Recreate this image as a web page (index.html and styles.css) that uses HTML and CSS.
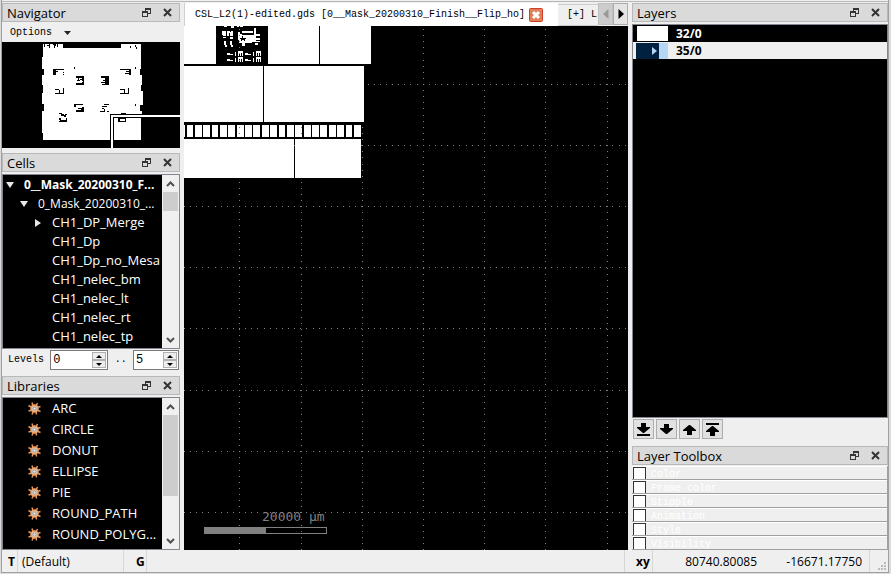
FILE: index.html
```
<!DOCTYPE html>
<html lang="en">
<head>
<meta charset="utf-8">
<title>Layout viewer</title>
<link rel="stylesheet" href="styles.css">
</head>
<body>
<svg class="defs" aria-hidden="true">
  <symbol id="float" viewBox="0 0 9 9"><path d="M3 0h6v6H6v3H0V3h3zM4 3h2v2h2V2H4zM1 5v3h4V5z" fill="#333" fill-rule="evenodd"/></symbol>
  <symbol id="close" viewBox="0 0 9 9"><path d="M1 1l7 7M8 1L1 8" stroke="#333" stroke-width="2"/></symbol>
  <symbol id="gear" viewBox="0 0 13 13">
    <path d="M5 4L4 0.500M8 4L9.500 1M4 5.500L0.500 3.500M9 5.500L12.500 4.500M4 8L0.500 9M9 8L12.500 9.500M5.500 9L4 12.500M8 9L8.500 12.500" stroke="#e8985a" stroke-width="1.500"/>
    <circle cx="6.500" cy="6.500" r="3.500" fill="#d5c4b5" stroke="#f0a060" stroke-width="1.500"/>
    <circle cx="6.500" cy="6.500" r="1.500" fill="#eee" stroke="#999"/>
  </symbol>
  <symbol id="chev-up" viewBox="0 0 9 6"><path d="M1 5l3.500-3.500L8 5" fill="none" stroke="#505050" stroke-width="2"/></symbol>
  <symbol id="chev-down" viewBox="0 0 9 6"><path d="M1 1l3.500 3.500L8 1" fill="none" stroke="#505050" stroke-width="2"/></symbol>
</svg>
<div class="window">
  <div class="main">
    <aside class="dock left">
      <section>
        <header class="dock-title"><h2>Navigator</h2><button aria-label="Float"><svg><use href="#float"/></svg></button><button aria-label="Close"><svg><use href="#close"/></svg></button></header>
        <nav class="menubar"><button>Options <svg width="7" height="4" viewBox="0 0 7 4"><path d="M0 0h7L3.500 4z" fill="#222"/></svg></button></nav>
        <svg class="overview" aria-label="Overview">
          <g transform="translate(-2 -42)" shape-rendering="crispEdges">
            <path d="M43 44H63V48H121V44H141V69H140V75H142V85H141V91H143V105H140V111H142V117H141V140H43V133H42V111H44V104H42V93H43V85H42V75H44V69H42V57H43Z" fill="#fff"/>
            <g transform="scale(.33333)" fill="#000">
              <path d="M132 132h3v9h-3zM141 135h6v-3h3v12h-3v-6h-6zM159 132h9v6h-3v6h-3v-9h-3zM171 132h3v9h-3zM390 138h3v6h-3zM405 135h3v6h3v6h-3v-6h-3z"/>
              <path d="M159 207h33v3h-24v3h6v3h-6v9h-9zM189 216h3v3h-3zM189 222h3v3h-3zM222 201h3v6h-3zM360 207h33v18h-6v-3h-12v-3h12v-3h-9v-3h9v-3h-27zM405 201h3v6h-3z"/>
              <path d="M228 228h24v27h-24v-6h18v-3h3v-3h-3v-3h-6v3h-9v-3h9v-3h6v-3h-18zM234 234h3v6h-3zM303 228h24v27h-21v-3h9v-3h-12v-3h12v-3h-6v-3h6v-6h-12z"/>
              <path d="M165 267h12v3h-12zM189 264h3v18h-27v-3h24zM178 270h3v9h-3zM360 267h15v3h-15zM384 264h3v18h-27v-3h12v-9h3v9h9z"/>
              <path d="M222 312h27v3h-21v6h-6zM246 321h6v15h-24v-6h15v-3h-9v-3h12zM312 312h15v3h-15zM303 318h18v3h-9v6h3v6h12v3h-6v-3h-6v3h-15v-3h12v-6h-6v-3h6v-3h-6zM405 312h3v6h-3z"/>
              <path d="M177 339h9v3h6v3h3v-3h6v3h-3v6h-6v-3h-9v-6h-6zM177 354h6v6h15v-6h3v12h-24v-3h3v-3h-3zM354 354h24v12h-24zM363 339h15v3h-15z"/>
              <path d="M360 357h15v6h-15z" fill="#fff"/>
            </g>
            <path d="M110 148V114H182V118H114V148z" fill="#000"/>
            <path d="M111 149V115H182V117H113V149z" fill="#fff"/>
            <path d="M113 149v-32h69v1h-68v31z" fill="#000"/>
          </g>
        </svg>
      </section>
      <section>
        <header class="dock-title"><h2>Cells</h2><button aria-label="Float"><svg><use href="#float"/></svg></button><button aria-label="Close"><svg><use href="#close"/></svg></button></header>
        <div class="view cells">
          <ul class="tree">
            <li class="top"><span class="open"></span>0__Mask_20200310_F...</li>
            <li class="sub"><span class="open"></span>0_Mask_20200310_...</li>
            <li class="parent"><span class="shut"></span>CH1_DP_Merge</li>
            <li>CH1_Dp</li><li>CH1_Dp_no_Mesa</li><li>CH1_nelec_bm</li><li>CH1_nelec_lt</li><li>CH1_nelec_rt</li><li>CH1_nelec_tp</li>
          </ul>
          <div class="scroll"><svg><use href="#chev-up"/></svg><span class="thumb short"></span><svg><use href="#chev-down"/></svg></div>
        </div>
        <div class="levels">
          <label for="from">Levels</label>
          <span class="spin wide"><input id="from" value="0"><span class="steps"><button aria-label="Increase"><i class="up"></i></button><button aria-label="Decrease"><i class="down"></i></button></span></span>
          <label for="to">..</label>
          <span class="spin"><input id="to" value="5"><span class="steps"><button aria-label="Increase"><i class="up"></i></button><button aria-label="Decrease"><i class="down"></i></button></span></span>
        </div>
      </section>
      <section class="grow">
        <header class="dock-title"><h2>Libraries</h2><button aria-label="Float"><svg><use href="#float"/></svg></button><button aria-label="Close"><svg><use href="#close"/></svg></button></header>
        <div class="view">
          <ul class="tree libs">
            <li><svg><use href="#gear"/></svg>ARC</li><li><svg><use href="#gear"/></svg>CIRCLE</li><li><svg><use href="#gear"/></svg>DONUT</li><li><svg><use href="#gear"/></svg>ELLIPSE</li><li><svg><use href="#gear"/></svg>PIE</li><li><svg><use href="#gear"/></svg>ROUND_PATH</li><li><svg><use href="#gear"/></svg>ROUND_POLYG...</li>
          </ul>
          <div class="scroll"><svg><use href="#chev-up"/></svg><span class="thumb long"></span><svg><use href="#chev-down"/></svg></div>
        </div>
      </section>
    </aside>

    <main class="editor">
      <div class="tabs">
        <div class="tab active"><span>CSL_L2(1)-edited.gds [0__Mask_20200310_Finish__Flip_ho]</span><button aria-label="Close tab"><svg width="14" height="14" viewBox="0 0 14 14"><rect x=".5" y=".5" width="13" height="13" rx="1" fill="#e08058" stroke="#d03c28"/><path d="M4 4l6 6M10 4l-6 6" stroke="#fff" stroke-width="3"/></svg></button></div>
        <div class="tab other">[+] L</div>
        <button class="arrow off" aria-label="Previous tabs" disabled><svg width="6" height="10" viewBox="0 0 6 10"><path d="M5.500 0v10L0 5z" fill="#999"/></svg></button>
        <button class="arrow" aria-label="Next tabs"><svg width="6" height="10" viewBox="0 0 6 10"><path d="M.5 0v10L6 5z" fill="#000"/></svg></button>
      </div>
      <svg class="canvas" aria-label="Layout canvas">
        <g transform="translate(-184 -26)" shape-rendering="crispEdges">
          <path d="M184 26h187v38H184zM184 66h180v56H184zM184 125h177v12H184zM184 139h177v39H184z" fill="#fff"/>
          <path d="M216 26h52v38h-52zM319 26h1v38h-1zM263 66h1v56h-1zM294 139h1v39h-1z" fill="#000"/>
          <path d="M185 131H361" stroke="#000" stroke-width="12" stroke-dasharray="1.500 6.870"/>
          <g transform="translate(214 24) scale(.33333)" fill="#fff">
            <path d="M30 6h9v3h-9zM51 6h9v6h-9zM69 6h6v3h-6zM78 6h9v3h-9zM24 21h12v15h-9v-3h-3zM39 21h9v3h3v-3h6v15h-9v-9h-3v9h-6zM27 39h9v3h-9zM48 39h9v6h-9zM30 51h6v12h3v6h-6v-6h-3zM48 51h6v12h3v6h-6v-6h-3z"/>
            <path d="M72 24h6v6h6v3h36v-3h18v6h-12v6h12v6h-12v3h12v3h-24v3h-21v6h-9v-6h-9v-9h-3zM84 21h33v6h-33zM120 12h6v18h-6zM84 57h9v9h-9zM123 57h9v6h-9z"/>
            <path d="M84 36h3v6h9v3h-3v6h-3v-3h-6v3h-3v-6h-3v-3h6z" fill="#000"/>
            <path d="M39 87h9v3h9v3H39zM63 84h3v12h-3zM72 81h15v15h-3v-9h-3v9h-3v-9h-3v9h-3zM93 87h9v3h9v3H93zM117 84h3v12h-3zM126 81h15v15h-3v-9h-3v9h-3v-9h-3v9h-3zM39 105h9v3h9v3H39zM63 102h3v12h-3zM72 99h15v15h-3v-9h-3v9h-3v-9h-3v9h-3zM93 105h9v3h9v3H93zM117 102h3v12h-3zM126 99h15v15h-3v-9h-3v9h-3v-9h-3v9h-3z"/>
          </g>
          <path class="grid" d="M239.500 28.900V2000M301.500 28.900V2000M362.500 28.900V2000M423.500 28.900V2000M484.500 28.900V2000M545.500 28.900V2000M607.500 28.900V2000M184 84.500H3000M184 145.500H3000M184 206.500H3000M184 267.500H3000M184 328.500H3000M184 390.500H3000M184 451.500H3000M184 512.500H3000"/>
          <path d="M184 26h32v38h-32zM268 26h51v38h-51zM320 26h51v38h-51zM184 66h79v56h-79zM264 66h100v56H264zM184 139h110v39H184zM295 139h66v39h-66z" fill="#fff"/>
          <path d="M204 527h62v7h-62z" fill="#808080"/>
          <path d="M204.500 527.500h122v6h-122z" fill="none" stroke="#808080"/>
          <text x="262" y="521" class="scale-text">20000 µm</text>
        </g>
      </svg>
    </main>

    <aside class="dock right">
      <section class="grow">
        <header class="dock-title"><h2>Layers</h2><button aria-label="Float"><svg><use href="#float"/></svg></button><button aria-label="Close"><svg><use href="#close"/></svg></button></header>
        <div class="view">
          <ul class="layers">
            <li><span class="swatch"></span>32/0</li>
            <li class="current"><span class="swatch blue"><svg width="5" height="8" viewBox="0 0 5 8"><path d="M0 0l5 4-5 4z" fill="#b3d7f5"/></svg></span>35/0</li>
          </ul>
        </div>
        <div class="moves">
          <button aria-label="Move to bottom"><svg viewBox="0 0 15 15"><path d="M5 1h5v4h4v1L8 11H7L1 6V5h4zM1 12h13v2H1z"/></svg></button>
          <button aria-label="Move down"><svg viewBox="0 0 15 15"><path d="M5 2h5v4h4v1L8 12H7L1 7V6h4z"/></svg></button>
          <button aria-label="Move up"><svg viewBox="0 0 15 15"><path d="M5 13h5V9h4V8L8 3H7L1 8v1h4z"/></svg></button>
          <button aria-label="Move to top"><svg viewBox="0 0 15 15"><path d="M5 14h5v-4h4V9L8 4H7L1 9v1h4zM1 1h13v2H1z"/></svg></button>
        </div>
      </section>
      <section class="toolbox">
        <header class="dock-title"><h2>Layer Toolbox</h2><button aria-label="Float"><svg><use href="#float"/></svg></button><button aria-label="Close"><svg><use href="#close"/></svg></button></header>
        <div class="options">
          <label><input type="checkbox"><span>Color</span></label>
          <label><input type="checkbox"><span>Frame color</span></label>
          <label><input type="checkbox"><span>Stipple</span></label>
          <label><input type="checkbox"><span>Animation</span></label>
          <label><input type="checkbox"><span>Style</span></label>
          <label><input type="checkbox"><span>Visibility</span></label>
        </div>
      </section>
    </aside>
  </div>
  <footer class="status">
    <b class="t">T</b><span class="tech">(Default)</span><b class="g">G</b><span class="message"></span><b class="xy">xy</b><span class="num">80740.80085</span><span class="num last">-16671.17750</span>
    <svg class="grip" width="9" height="9" viewBox="0 0 9 9"><path d="M6 0h2v2H6zM3 3h2v2H3zM6 3h2v2H6zM0 6h2v2H0zM3 6h2v2H3zM6 6h2v2H6z" fill="#bbb"/></svg>
  </footer>
</div>
</body>
</html>
```
FILE: styles.css
```
* { box-sizing: border-box; }
body { margin: 0; height: 100vh; overflow: hidden; background: #dcdcdc; color: #000; font: 13px/19px "Open Sans", sans-serif; }
button { padding: 0; border: 0; background: none; color: inherit; font: inherit; display: flex; align-items: center; justify-content: center; }
ul { list-style: none; margin: 0; padding: 0; }
svg { display: block; flex: none; }
.defs { position: absolute; width: 0; height: 0; }
.window { height: calc(100vh - 1px); margin: 0 2px 1px 1px; border: 1px solid #a0a0a0; border-top: 0; background: #efefef; display: flex; flex-direction: column; }
.main { flex: 1; min-height: 0; display: flex; gap: 4px; margin-top: 1px; border-top: 1px solid #b8b8b8; padding-top: 1px; }
.dock { display: flex; flex-direction: column; gap: 5px; flex: none; min-height: 0; }
.left { width: 178px; }
.right { width: 256px; }
.grow { flex: 1; min-height: 0; display: flex; flex-direction: column; }

.dock-title { height: 19px; flex: none; display: flex; align-items: center; gap: 12px; padding: 0 7px 0 4px; border: 1px solid #b8b8b8; background: #dadada; }
.dock-title h2 { flex: 1; margin: 0; padding-top: 2px; font-size: 13px; font-weight: 400; line-height: 17px; }
.dock-title svg { width: 9px; height: 9px; }
.menubar { height: 20px; padding: 2px 8px 0; display: flex; font: 10px/18px "Liberation Mono", monospace; }
.menubar button { gap: 12px; }
.overview { width: 100%; height: 106px; background: #000; }

.view { flex: 1; min-height: 0; margin-top: 2px; display: flex; overflow: hidden; background: #000; border: 1px solid #828790; color: #fff; }
.cells { height: 175px; }
.tree { flex: 1; min-width: 0; overflow: hidden; white-space: nowrap; }
.tree li { height: 19px; padding-left: 49px; display: flex; align-items: center; }
.tree .top { padding-left: 3px; gap: 10px; font-weight: 700; font-size: 12px; }
.tree .sub { padding-left: 17px; gap: 10px; font-size: 12px; }
.tree .parent { padding-left: 32px; gap: 11px; }
.open { flex: none; border: 4px solid transparent; border-top: 6px solid #e8e8e8; border-bottom: 0; }
.shut { flex: none; border: 4px solid transparent; border-left: 6px solid #e8e8e8; border-right: 0; }
.libs li { height: 21px; padding-left: 25px; gap: 11px; }
.libs svg { width: 13px; height: 13px; }
.scroll { width: 17px; flex: none; background: #f0f0f0; display: flex; flex-direction: column; align-items: center; padding: 6px 1px 5px; }
.scroll svg { width: 9px; height: 6px; }
.scroll svg:last-child { margin-top: auto; }
.thumb { width: 15px; margin-top: 5px; background: #cdcdcd; }
.short { height: 19px; }
.long { height: 81px; }

.levels { height: 22px; display: flex; align-items: center; justify-content: space-between; padding: 0 1px 0 6px; font: 10px/20px "Liberation Mono", monospace; }
.spin { width: 46px; height: 20px; border: 1px solid #7a7a7a; background: #fff; display: flex; }
.wide { width: 58px; }
.spin input { flex: 1; min-width: 0; border: 0; padding: 0 2px; font: 12px "Liberation Mono", monospace; background: none; }
.steps { width: 14px; margin: 1px; display: flex; flex-direction: column; }
.steps button { flex: 1; background: #ededed; border: 1px solid #b0b0b0; }
.steps i { border: 3px solid transparent; }
.steps .up { border-top: 0; border-bottom-color: #000; }
.steps .down { border-bottom: 0; border-top-color: #000; }

.editor { flex: 1; min-width: 0; display: flex; flex-direction: column; }
.tabs { height: 23px; flex: none; display: flex; font: 10px/22px "Liberation Mono", monospace; white-space: nowrap; }
.tab { display: flex; align-items: center; }
.active { flex: none; background: #fff; border-left: 1px solid #d0d0d0; padding: 0 15px 0 10px; gap: 4px; }
.other { flex: 1; min-width: 0; margin-top: 1px; overflow: hidden; border: 1px solid #ccc; border-width: 1px 0; padding-left: 9px; line-height: 20px; }
.arrow { width: 15px; flex: none; height: 22px; background: #e4e4e4; border: 1px solid #adadad; }
.off { background: #ccc; border-color: #bfbfbf; }
.canvas { flex: 1; min-height: 0; width: 100%; background: #000; overflow: hidden; }
.grid { fill: none; stroke: #808080; stroke-dasharray: 1 5.120; }
.scale-text { fill: #808080; font: 13px "DejaVu Sans Mono", monospace; }

.layers { width: 100%; }
.layers li { height: 17px; padding-left: 4px; gap: 8px; display: flex; align-items: center; font-size: 12px; font-weight: 700; }
.layers .current { padding-left: 3px; background: #efefef; color: #000; }
.swatch { width: 31px; height: 15px; background: #fff; }
.blue { width: 32px; height: 16px; background: #00213f; border-right: 9px solid #b3d7f5; display: flex; align-items: center; padding-left: 16px; }
.moves { display: flex; gap: 2px; padding: 1px 1px 2px; }
.moves button { width: 21px; height: 20px; border: 1px solid #adadad; background: #e1e1e1; }
.moves svg { width: 15px; height: 15px; }
.options { margin-top: 1px; border-right: 1px solid #a0a0a0; }
.options label { height: 14px; display: flex; align-items: center; gap: 5px; padding-left: 1px; border-top: 1px solid #fff; border-bottom: 1px solid #a0a0a0; color: #fff; font: 10px/12px "Liberation Mono", monospace; }
.options span { padding-top: 3px; }
.options input { appearance: none; width: 13px; height: 12px; margin: 0; border: 1px solid #333; border-bottom: 0; background: #fff; }

.status { height: 22px; flex: none; display: flex; line-height: 24px; font-size: 12px; }
.status > * { flex: none; }
.t { width: 16px; padding-left: 6px; border-right: 1px solid #d7d7d7; }
.tech { width: 106px; padding-left: 4px; border-right: 1px solid #d7d7d7; }
.g { width: 23px; padding-left: 12px; border-right: 1px solid #d7d7d7; }
.status .message { flex: 1; border-right: 1px solid #d7d7d7; }
.xy { width: 28px; padding-left: 11px; border-right: 1px solid #d7d7d7; }
.num { width: 104px; text-align: right; }
.last { width: 113px; padding-right: 7px; border-right: 1px solid #d7d7d7; }
.grip { align-self: flex-end; margin: 0 1px 1px 8px; }
```
